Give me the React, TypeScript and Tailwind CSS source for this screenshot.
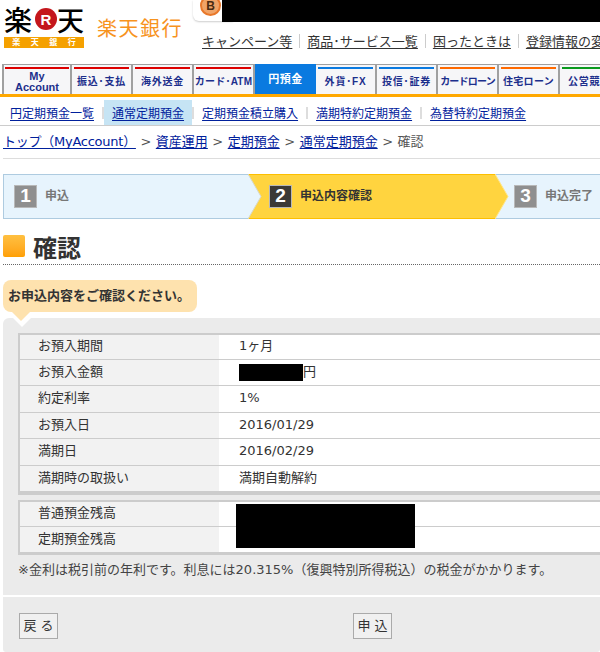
const jp = { fontFamily: '"DejaVu Sans", "Noto Sans CJK JP", sans-serif' };
const tabFont = { fontFamily: '"Liberation Sans", "Noto Sans CJK JP", sans-serif' };

function Tab({ label, color, active, track = "tracking-[0.8px]" }: { label: React.ReactNode; color: string; active?: boolean; track?: string }) {
  if (active)
    return (
      <div className="w-[61px] h-[30px] shrink-0 bg-[#0a7ae0] text-white flex items-center justify-center text-[11px] font-bold tracking-[0.5px]" style={tabFont}>{label}</div>
    );
  return (
    <div className={`w-[61px] h-[30px] shrink-0 border-t border-r-2 border-[#a0a0a0] bg-[#f6f6f8] text-[#1c2f8c] text-[10px] font-bold flex flex-col items-center px-[2px] ${track}`} style={tabFont}>
      <div className={`w-full h-[2px] mt-[2px] ${color}`} />
      <div className="flex-1 flex items-center justify-center text-center leading-[12px] whitespace-nowrap">{label}</div>
    </div>
  );
}

function Step({ n, label, cur, w, ml = "ml-[10px]" }: { n: string; label: string; cur?: boolean; w: string; ml?: string }) {
  return (
    <div className={`${w} h-[45px] shrink-0 flex items-center border-y ${cur ? "bg-[#ffd43f] border-[#fdbf00]" : "bg-[#e7f4fd] border-[#aecbe0]"}`}>
      <div className={`${ml} w-[23px] h-[23px] border flex items-center justify-center text-[19px] font-bold text-white border-[#b8b8b8] ${cur ? "bg-[#3c3a36]" : "bg-[#8f8f8f]"}`} style={{ fontFamily: '"Liberation Sans", sans-serif' }}>{n}</div>
      <div className={`ml-[8px] text-[12px] font-bold pb-[2px] ${cur ? "text-[#333]" : "text-[#777]"}`}>{label}</div>
    </div>
  );
}

function Row({ k, v, first }: { k: string; v: React.ReactNode; first?: boolean }) {
  return (
    <div className={`flex border-b border-[#cccccc] ${first ? "h-[24.5px]" : "h-[26.5px]"}`}>
      <div className="w-[199px] shrink-0 bg-[#f2f2f2] pl-[18px] pb-[2px] flex items-center text-[13px] text-[#333]">{k}</div>
      <div className="flex-1 bg-white pl-[20px] pb-[2px] flex items-center text-[13px] text-[#333]">{v}</div>
    </div>
  );
}

const Sep = () => <span className="inline-block w-[1px] h-[14px] bg-[#cccccc] mx-[7px]" />;
const SubSep = () => <span className="inline-block w-[2px] h-[12px] bg-[#dddddd] mx-[8px]" />;
const Gt = () => <span className="mx-[4.5px]">&gt;</span>;

export default function App() {
  const link = "text-[#333] underline underline-offset-2";
  const blue = "text-[#00209c] underline underline-offset-2";
  return (
    <div className="w-[600px] h-[652px] overflow-hidden bg-white relative" style={jp}>
      <div className="w-[800px]">
        {/* header */}
        <div className="h-[64px] flex relative">
          <div className="ml-[4px] mt-[8px] w-[80px] h-[40px] flex flex-col items-center">
            <div className="flex items-center h-[27px] w-full leading-none text-black">
              <span className="w-[29px] shrink-0 text-[28px] font-medium leading-none">楽</span>
              <span className="w-[22px] h-[22px] shrink-0 ml-[2px] self-start rounded-full bg-[#c4161c] text-white text-[15px] font-bold flex items-center justify-center" style={{ fontFamily: '"Liberation Sans", sans-serif' }}>R</span>
              <span className="shrink-0 text-[27px] font-medium leading-none">天</span>
            </div>
            <div className="w-full h-[11px] mt-[2px] bg-[#f5a100] text-white text-[8px] font-bold flex items-center justify-around px-[3px] leading-none">
              <span>楽</span><span>天</span><span>銀</span><span>行</span>
            </div>
          </div>
          <div className="ml-[13px] mt-[15px] text-[20px] leading-[28px] tracking-[1.5px] text-[#f7931e] h-[28px]">楽天銀行</div>
          <div className="absolute left-[193px] top-0 w-[40px] h-[21px] bg-white rounded-bl-[6px] shadow-[0_1px_2px_rgba(0,0,0,0.2)]">
            <div className="absolute left-[7px] top-[-5px] w-[21px] h-[21px] rounded-full bg-[#f0a468] border-2 border-[#e8782a] text-[#4a2a10] text-[12px] font-bold flex items-center justify-center" style={{ fontFamily: '"Liberation Sans", sans-serif' }}>B</div>
          </div>
          <div className="absolute left-[222px] top-0 right-0 h-[22px] bg-black" />
          <div className="absolute left-[202px] top-[32px] text-[13px] leading-[18px] whitespace-nowrap flex items-center" style={{ fontFamily: '"Noto Sans CJK JP", sans-serif' }}>
            <a className={link}>キャンペーン等</a><Sep />
            <a className={link}>商品･サービス一覧</a><Sep />
            <a className={link}>困ったときは</a><Sep />
            <a className={link}>登録情報の変更</a>
          </div>
        </div>
        {/* tabs */}
        <div className="flex pl-[2px] border-b-[3px] border-[#ffa800] h-[33px]">
          <div className="w-[70px] h-[30px] shrink-0 border-t border-x-2 border-[#a0a0a0] bg-[#f6f6f8] text-[#1c2f8c] text-[11px] font-bold flex flex-col items-center px-[1px]" style={tabFont}>
            <div className="w-full h-[2px] mt-[2px] bg-[#dd0000]" />
            <div className="flex-1 flex items-center justify-center text-center leading-[11px]">My<br />Account</div>
          </div>
          <Tab label="振込･支払" color="bg-[#dd0000]" />
          <Tab label="海外送金" color="bg-[#dd0000]" />
          <Tab label="カード･ATM" color="bg-[#dd0000]" track="tracking-[0.2px]" />
          <Tab label="円預金" color="" active />
          <Tab label="外貨･FX" color="bg-[#0a7ae0]" />
          <Tab label="投信･証券" color="bg-[#0a7ae0]" />
          <Tab label="カードローン" color="bg-[#ff6a00]" track="tracking-[-0.8px]" />
          <Tab label="住宅ローン" color="bg-[#ff6a00]" track="tracking-[0.3px]" />
          <Tab label="公営競技" color="bg-[#0a9a1e]" />
        </div>
        {/* sub nav */}
        <div className="w-[600px] h-[29px] pt-[3px] border-b border-[#cccccc] flex items-center pl-[10px] text-[12px] whitespace-nowrap" style={{ fontFamily: '"Noto Sans CJK JP", sans-serif' }}>
          <a className={blue}>円定期預金一覧</a>
          <span className="inline-block w-[2px] h-[12px] bg-[#dddddd] ml-[8px]" />
          <div className="px-[8px] h-[25px] self-end bg-[#c6e4f4] flex items-center"><a className={blue}>通常定期預金</a></div>
          <span className="inline-block w-[2px] h-[12px] bg-[#dddddd] mr-[8px]" />
          <a className={blue}>定期預金積立購入</a><SubSep />
          <a className={blue}>満期特約定期預金</a><SubSep />
          <a className={blue}>為替特約定期預金</a>
        </div>
        {/* breadcrumb */}
        <div className="w-[597px] ml-[3px] h-[33px] border-b border-[#dddddd] flex items-center text-[13px] whitespace-nowrap text-[#555]">
          <a className={`${blue} tracking-[-0.25px]`}>トップ（MyAccount）</a><Gt />
          <a className={blue}>資産運用</a><Gt />
          <a className={blue}>定期預金</a><Gt />
          <a className={blue}>通常定期預金</a><Gt />
          <span>確認</span>
        </div>
        {/* steps */}
        <div className="mt-[15px] ml-[3px] flex relative">
          <div className="border-l border-[#aecbe0]"><Step n="1" label="申込" w="w-[244px]" /></div>
          <Step n="2" label="申込内容確認" cur w="w-[247px]" ml="ml-[21px]" />
          <Step n="3" label="申込完了" w="w-[110px]" ml="ml-[19px]" />
          <svg className="absolute left-[245px] top-0" width="16" height="45" viewBox="0 0 16 45"><path d="M0 0 L13 22.5 L0 45 Z" fill="#e7f4fd" /><path d="M0 0 L13 22.5 L0 45" fill="none" stroke="#d8d8c8" strokeWidth="1" /></svg>
          <svg className="absolute left-[492px] top-0" width="16" height="45" viewBox="0 0 16 45"><path d="M0 0 L13 22.5 L0 45 Z" fill="#ffd43f" /><path d="M0 0 L13 22.5 L0 45" fill="none" stroke="#ffe58a" strokeWidth="1" /></svg>
        </div>
        {/* title */}
        <div className="w-[597px] ml-[3px] h-[46px] pt-[16px] flex items-start border-b border-dotted border-[#666]">
          <div className="w-[22px] h-[22px] rounded-[2px] bg-gradient-to-b from-[#ffc040] to-[#ffa000]" />
          <h1 className="ml-[8px] mt-[2px] text-[24px] font-bold text-[#333] leading-[24px]">確認</h1>
        </div>
        {/* bubble */}
        <div className="w-[194px] h-[32px] ml-[3px] mt-[15px] rounded-[8px] bg-[#fee2ae] flex items-center pl-[5px] text-[13px] font-bold text-[#333] whitespace-nowrap">お申込内容をご確認ください。</div>
        {/* panel */}
        <div className="w-[597px] ml-[3px] mt-[6px] h-[277px] bg-[#ebebeb] rounded-tl-[6px] pt-[15px] pl-[15px] relative">
          <div className="absolute left-[10px] top-0 w-0 h-0 border-x-[9px] border-x-transparent border-t-[9px] border-t-white" />
          <div className="absolute left-[9px] top-[-6px] w-0 h-0 border-x-[9px] border-x-transparent border-t-[9px] border-t-[#fee2ae]" />
          <div className="border-t-2 border-l-2 border-[#cccccc] bg-white">
            <Row first k="お預入期間" v="1ヶ月" />
            <Row k="お預入金額" v={<><span className="inline-block w-[64px] h-[17px] mt-[2px] bg-black" />円</>} />
            <Row k="約定利率" v="1%" />
            <Row k="お預入日" v="2016/01/29" />
            <Row k="満期日" v="2016/02/29" />
            <Row k="満期時の取扱い" v="満期自動解約" />
          </div>
          <div className="h-[3px] bg-[#cccccc]" />
          <div className="mt-[5px] border-t-2 border-l-2 border-[#cccccc] bg-white relative">
            <Row first k="普通預金残高" v="" />
            <Row k="定期預金残高" v="" />
            <div className="absolute left-[216px] top-[2px] w-[179px] h-[44px] bg-black" />
          </div>
          <div className="h-[2px] bg-[#cccccc]" />
          <p className="mt-[6px] text-[13px] leading-[18px] text-[#444] whitespace-nowrap">※金利は税引前の年利です。利息には20.315%（復興特別所得税込）の税金がかかります。</p>
        </div>
        {/* footer */}
        <div className="w-[597px] ml-[3px] mt-[2px] h-[55px] bg-[#ebebeb] rounded-b-[3px] relative flex items-start pt-[16px]">
          <button className="ml-[16px] w-[39px] h-[26px] border border-[#aaaaaa] bg-[#f0f0f0] text-[13px] text-[#333]">戻 る</button>
          <button className="ml-[295px] w-[39px] h-[26px] border border-[#aaaaaa] bg-[#f0f0f0] text-[13px] text-[#333]">申 込</button>
        </div>
      </div>
    </div>
  );
}
